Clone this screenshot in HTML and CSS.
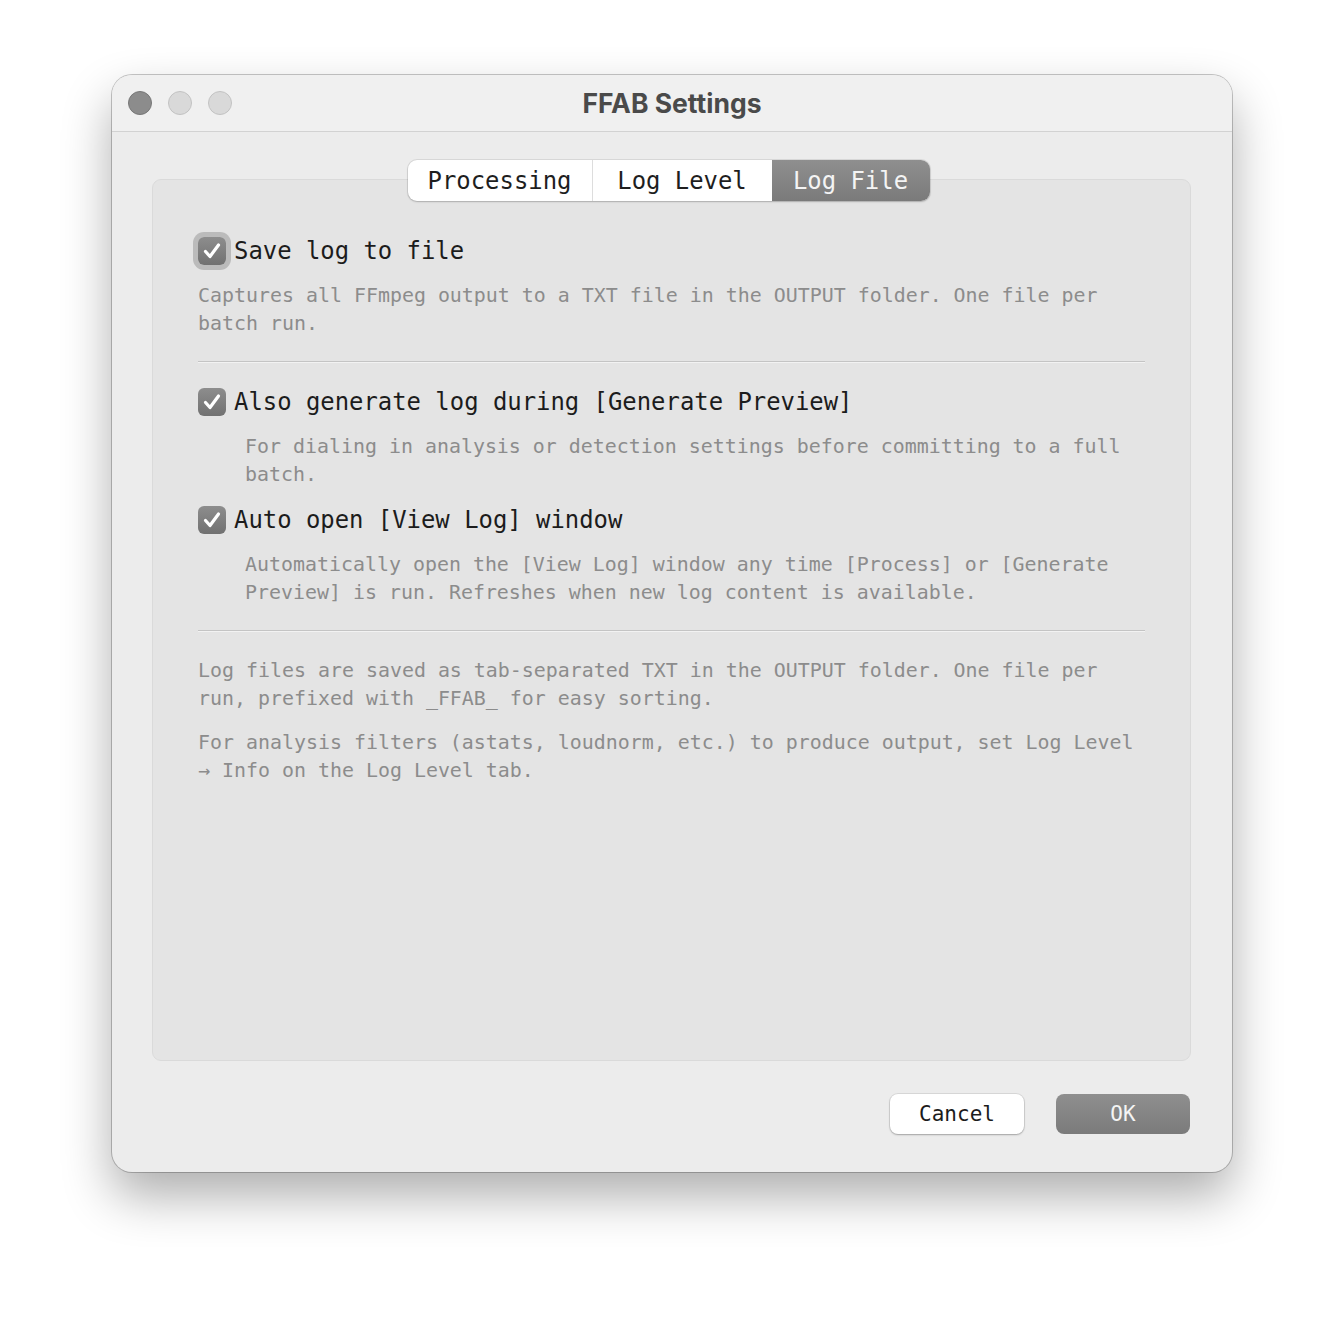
FILE: index.html
```html
<!DOCTYPE html>
<html lang="en">
<head>
    <meta charset="UTF-8" />
    <meta name="viewport" content="width=device-width, initial-scale=1.0" />
    <title>FFAB Settings</title>
    <link rel="stylesheet" href="styles.css">
</head>
<body>
  <div class="window">
    <div class="titlebar">
      <div class="lights">
        <span class="light light-close"></span>
        <span class="light"></span>
        <span class="light"></span>
      </div>
      <h1 class="title">FFAB Settings</h1>
      <div></div>
    </div>

    <div class="content">
      <div class="tabs">
        <div class="tab tab-processing">Processing</div>
        <div class="tab tab-level">Log Level</div>
        <div class="tab tab-file active">Log File</div>
      </div>

      <div class="panel">
        <!-- main option -->
        <label class="option">
          <span class="check focused">
            <svg viewBox="0 0 28 28" width="28" height="28"><path d="M7.5 14.5 L12 19.5 L20.5 8" /></svg>
          </span>
          <span class="option-label">Save log to file</span>
        </label>
        <p class="desc">Captures all FFmpeg output to a TXT file in the OUTPUT folder. One file per batch run.</p>

        <div class="separator"></div>

        <label class="option">
          <span class="check">
            <svg viewBox="0 0 28 28" width="28" height="28"><path d="M7.5 14.5 L12 19.5 L20.5 8" /></svg>
          </span>
          <span class="option-label">Also generate log during [Generate Preview]</span>
        </label>
        <p class="desc indent">For dialing in analysis or detection settings before committing to a full batch.</p>

        <label class="option">
          <span class="check">
            <svg viewBox="0 0 28 28" width="28" height="28"><path d="M7.5 14.5 L12 19.5 L20.5 8" /></svg>
          </span>
          <span class="option-label">Auto open [View Log] window</span>
        </label>
        <p class="desc indent">Automatically open the [View Log] window any time [Process] or [Generate Preview] is run. Refreshes when new log content is available.</p>

        <div class="separator"></div>

        <p class="note">Log files are saved as tab-separated TXT in the OUTPUT folder. One file per run, prefixed with _FFAB_ for easy sorting.</p>
        <p class="note">For analysis filters (astats, loudnorm, etc.) to produce output, set Log Level → Info on the Log Level tab.</p>
      </div>

      <div class="actions">
        <button class="btn btn-cancel">Cancel</button>
        <button class="btn btn-ok">OK</button>
      </div>
    </div>
  </div>
</body>
</html>
```

FILE: styles.css
```css
body {
    margin: 0;
    padding: 75px 112px;
    background: #ffffff;
    font-family: "DejaVu Sans Mono", "Liberation Mono", monospace;
}

.window {
    width: 1120px;
    height: 1097px;
    box-sizing: border-box;
    background: #ececec;
    border-radius: 20px;
    box-shadow: 0 0 0 1px rgba(0,0,0,0.22), 0 24px 50px rgba(0,0,0,0.32);
    display: flex;
    flex-direction: column;
    overflow: hidden;
}

.titlebar {
    height: 56px;
    background: #f0f0f0;
    border-bottom: 1px solid #d2d2d2;
    display: grid;
    grid-template-columns: 1fr auto 1fr;
    align-items: center;
}

    .titlebar .lights {
        display: flex;
        gap: 16px;
        padding-left: 16px;
    }

    .titlebar .title {
        margin: 0;
        font-family: "Inter", "Open Sans", sans-serif;
        font-size: 26.5px;
        font-weight: 700;
        color: #4a4a4a;
    }

.light {
    width: 22px;
    height: 22px;
    border-radius: 50%;
    background: #d9d9d9;
    border: 1px solid #c2c2c2;
}

.light-close {
    background: #8c8c8c;
    border-color: #777777;
}

.content {
    flex: 1;
    display: flex;
    flex-direction: column;
    padding: 28px 41px 38px 40px;
}

.tabs {
    align-self: center;
    display: flex;
    height: 41px;
    margin-left: -6px;
    background: #ffffff;
    border-radius: 9px;
    box-shadow: 0 0 0 1px rgba(0,0,0,0.08), 0 1px 2px rgba(0,0,0,0.18);
    position: relative;
    z-index: 1;
}

.tab {
    display: flex;
    align-items: center;
    justify-content: center;
    font-size: 23.9px;
    color: #1e1e1e;
}

.tab-processing {
    width: 184px;
    border-right: 1px solid #dddddd;
}

.tab-level {
    width: 179px;
}

.tab-file {
    width: 158px;
}

.tab.active {
    background: linear-gradient(#8f8f8f, #7a7a7a);
    color: #f4f4f4;
    border-radius: 0 9px 9px 0;
}

.panel {
    flex: 1;
    margin-top: -22px;
    padding: 55px 45px 0 45px;
    background: #e4e4e4;
    border: 1px solid #dadada;
    border-radius: 9px;
}

.option {
    display: flex;
    align-items: center;
    gap: 8px;
    height: 32px;
    font-size: 23.9px;
    color: #1c1c1c;
}

.check {
    width: 28px;
    height: 28px;
    border-radius: 6px;
    background: linear-gradient(#8d8d8d, #717171);
    flex-shrink: 0;
}

    .check svg {
        display: block;
        fill: none;
        stroke: #ffffff;
        stroke-width: 3.2;
        stroke-linecap: round;
        stroke-linejoin: round;
    }

.check.focused {
    box-shadow: 0 0 0 5px rgba(160,160,160,0.6);
}

.desc {
    margin: 15px 0 0 0;
    font-size: 19.93px;
    line-height: 28px;
    color: #8c8c8c;
}

    .desc.indent {
        margin-left: 47px;
        margin-bottom: 15px;
    }

.separator {
    height: 1px;
    background: #c4c4c4;
    border-bottom: 1px solid #f2f2f2;
    margin: 23px 0 23px 0;
}

.note {
    margin: 16px 0 0 0;
    font-size: 19.93px;
    line-height: 28px;
    color: #8c8c8c;
}

    .separator + .note {
        margin-top: 25px;
    }

.actions {
    display: flex;
    justify-content: flex-end;
    gap: 32px;
    margin-top: 33px;
    padding-right: 1px;
}

.btn {
    width: 134px;
    height: 40px;
    border: none;
    border-radius: 8px;
    font-family: "DejaVu Sans Mono", "Liberation Mono", monospace;
    font-size: 21px;
    cursor: pointer;
}

.btn-cancel {
    background: #ffffff;
    color: #1c1c1c;
    box-shadow: 0 0 0 1px rgba(0,0,0,0.08), 0 1px 2px rgba(0,0,0,0.25);
}

.btn-ok {
    background: linear-gradient(#8f8f8f, #7b7b7b);
    color: #f4f4f4;
}
```
